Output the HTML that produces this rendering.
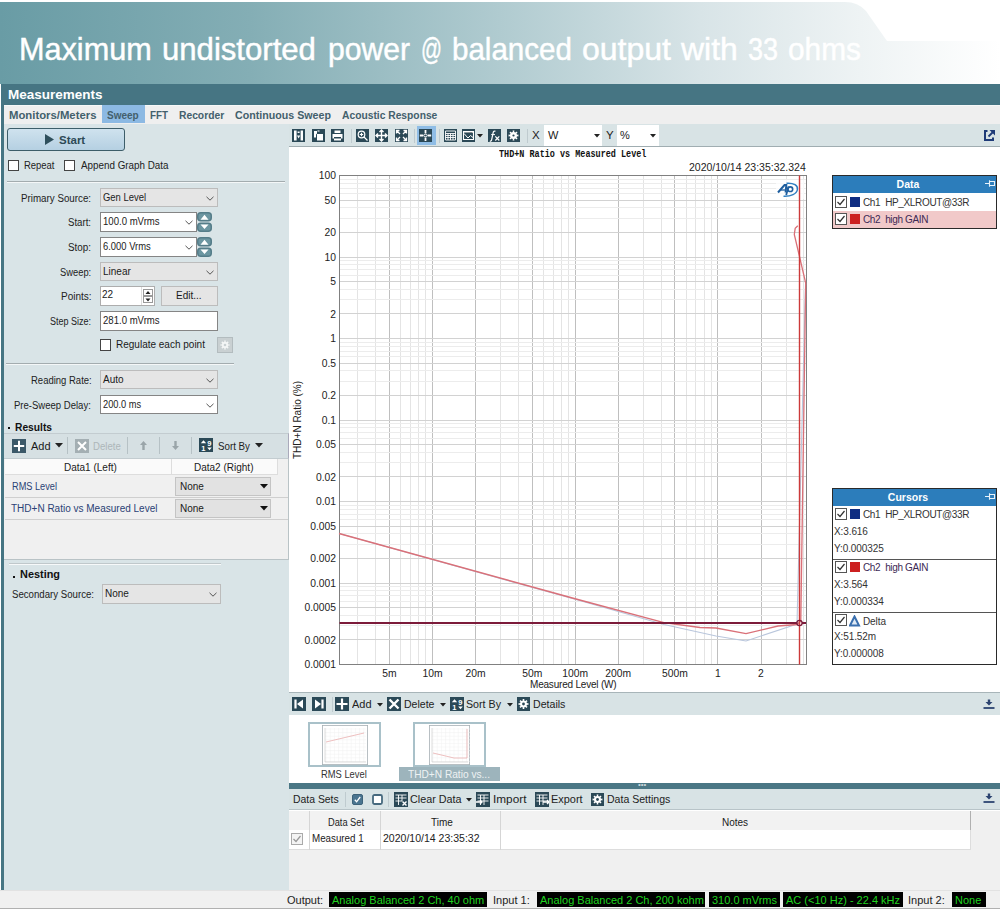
<!DOCTYPE html><html><head><meta charset="utf-8"><style>
*{margin:0;padding:0;box-sizing:border-box}
html,body{width:1000px;height:911px;overflow:hidden;background:#fff;font-family:"Liberation Sans",sans-serif;font-size:10px;color:#1a1a1a}
.a{position:absolute;white-space:nowrap}
.t{position:absolute;white-space:nowrap;line-height:1}
.ico{position:absolute;background:#2e4f5c}
.combo{position:absolute;background:#e5e5e5;border:1px solid #bcbcbc}
.inp{position:absolute;background:#fff;border:1px solid #858585}
.chev{position:absolute}
.cb{position:absolute;width:12px;height:12px;border:1px solid #333;background:#fff}
</style></head><body>

<svg class="a" style="left:0;top:0" width="1000" height="84" viewBox="0 0 1000 84">
<defs><linearGradient id="bg" x1="0" y1="0" x2="1" y2="0">
<stop offset="0" stop-color="#699ca5"/><stop offset="0.25" stop-color="#84aeb5"/><stop offset="0.5" stop-color="#b0cbd0"/><stop offset="0.7" stop-color="#d8e4e7"/><stop offset="0.86" stop-color="#eef3f4"/><stop offset="1" stop-color="#ffffff"/></linearGradient></defs>
<path d="M0,2 L845,2 Q858,2 866,11 L887,41 L1000,41 L1000,84 L0,84 Z" fill="url(#bg)"/>
</svg>

<div class="t" style="left:18.80px;top:35px;font-size:30.7px;color:#fff;transform-origin:0 0;transform:scaleX(0.9979);-webkit-text-stroke:0.45px #fff;">Maximum</div>
<div class="t" style="left:162.00px;top:35px;font-size:30.7px;color:#fff;transform-origin:0 0;transform:scaleX(1.0134);-webkit-text-stroke:0.45px #fff;">undistorted</div>
<div class="t" style="left:328.00px;top:35px;font-size:30.7px;color:#fff;transform-origin:0 0;transform:scaleX(0.9802);-webkit-text-stroke:0.45px #fff;">power</div>
<div class="t" style="left:421.00px;top:35px;font-size:30.7px;color:#fff;transform-origin:0 0;transform:scaleX(0.6739);-webkit-text-stroke:0.45px #fff;">@</div>
<div class="t" style="left:452.00px;top:35px;font-size:30.7px;color:#fff;transform-origin:0 0;transform:scaleX(0.9628);-webkit-text-stroke:0.45px #fff;">balanced</div>
<div class="t" style="left:582.00px;top:35px;font-size:30.7px;color:#fff;transform-origin:0 0;transform:scaleX(1.0428);-webkit-text-stroke:0.45px #fff;">output</div>
<div class="t" style="left:681.16px;top:35px;font-size:30.7px;color:#fff;transform-origin:0 0;transform:scaleX(1.0402);-webkit-text-stroke:0.45px #fff;">with</div>
<div class="t" style="left:748.00px;top:35px;font-size:30.7px;color:#fff;transform-origin:0 0;transform:scaleX(0.8804);-webkit-text-stroke:0.45px #fff;">33</div>
<div class="t" style="left:788.00px;top:35px;font-size:30.7px;color:#fff;transform-origin:0 0;transform:scaleX(0.9725);-webkit-text-stroke:0.45px #fff;">ohms</div>
<div class="a" style="left:1px;top:84px;width:999px;height:806px;background:#467583"></div>
<div class="t" style="left:8px;top:88px;font-size:13.5px;font-weight:bold;color:#fff">Measurements</div>
<div class="a" style="left:4px;top:105px;width:996px;height:19px;background:#efefef;border-top:1px solid #f6f8f8"></div>
<div class="a" style="left:102px;top:105px;width:43px;height:18px;background:#8cb9e3"></div>
<div class="t" style="left:9px;top:110px;font-size:11.4px;font-weight:bold;color:#43606c;transform-origin:0 0;transform:scaleX(0.9939);">Monitors/Meters</div>
<div class="t" style="left:107px;top:110px;font-size:11.4px;font-weight:bold;color:#43606c;transform-origin:0 0;transform:scaleX(0.8792);">Sweep</div>
<div class="t" style="left:150.2px;top:110px;font-size:11.4px;font-weight:bold;color:#43606c;transform-origin:0 0;transform:scaleX(0.8617);">FFT</div>
<div class="t" style="left:179px;top:110px;font-size:11.4px;font-weight:bold;color:#43606c;transform-origin:0 0;transform:scaleX(0.9031);">Recorder</div>
<div class="t" style="left:235px;top:110px;font-size:11.4px;font-weight:bold;color:#43606c;transform-origin:0 0;transform:scaleX(0.9357);">Continuous Sweep</div>
<div class="t" style="left:342.2px;top:110px;font-size:11.4px;font-weight:bold;color:#43606c;transform-origin:0 0;transform:scaleX(0.9018);">Acoustic Response</div>
<div class="a" style="left:4px;top:124px;width:285px;height:766px;background:#d9e4e7"></div>
<div class="a" style="left:7px;top:128px;width:118px;height:23px;border:1px solid #3d5d69;border-radius:3px;background:linear-gradient(#cfe2ee,#b5d0e2)"></div>
<svg class="a" style="left:45px;top:134px" width="10" height="11"><path d="M0,0 L9,5.5 L0,11Z" fill="#2e4f5c"/></svg>
<div class="t" style="left:59px;top:135px;font-size:11.5px;font-weight:bold;color:#2e4a56">Start</div>
<div class="cb" style="left:8px;top:160px;width:11px;height:11px;border-color:#444"></div>
<div class="t" style="left:24.3px;top:161px;font-size:10px;color:#222;transform-origin:0 0;transform:scaleX(0.9459);">Repeat</div>
<div class="cb" style="left:64px;top:160px;width:11px;height:11px;border-color:#444"></div>
<div class="t" style="left:80.5px;top:161px;font-size:10px;color:#222;transform-origin:0 0;transform:scaleX(0.9838);">Append Graph Data</div>
<div class="a" style="left:7px;top:181px;width:278px;height:1px;background:#a3acaf;box-shadow:0 1px 0 #f4f7f8"></div>
<div class="t" style="left:21.10px;top:194px;font-size:10px;color:#222;transform-origin:0 0;transform:scaleX(0.9777);">Primary Source:</div>
<div class="combo" style="left:100px;top:188px;width:118px;height:19px"></div>
<div class="t" style="left:103.00px;top:193px;font-size:10px;color:#222;transform-origin:0 0;transform:scaleX(0.9430);">Gen Level</div>
<svg class="chev" style="left:206px;top:195.5px" width="8" height="5"><path d="M0.5,0.8L4,4.2L7.5,0.8" fill="none" stroke="#555" stroke-width="1"/></svg>
<div class="t" style="left:68.20px;top:218px;font-size:10px;color:#222;transform-origin:0 0;transform:scaleX(0.9623);">Start:</div>
<div class="inp" style="left:100px;top:212px;width:97px;height:20px"></div>
<div class="t" style="left:103.00px;top:217px;font-size:10px;color:#222;transform-origin:0 0;transform:scaleX(0.9577);">100.0 mVrms</div>
<svg class="chev" style="left:185px;top:220.0px" width="8" height="5"><path d="M0.5,0.8L4,4.2L7.5,0.8" fill="none" stroke="#555" stroke-width="1"/></svg>
<div class="t" style="left:68.20px;top:243px;font-size:10px;color:#222;transform-origin:0 0;transform:scaleX(0.9850);">Stop:</div>
<div class="inp" style="left:100px;top:237px;width:97px;height:20px"></div>
<div class="t" style="left:103.00px;top:242px;font-size:10px;color:#222;transform-origin:0 0;transform:scaleX(0.9399);">6.000 Vrms</div>
<svg class="chev" style="left:185px;top:245.0px" width="8" height="5"><path d="M0.5,0.8L4,4.2L7.5,0.8" fill="none" stroke="#555" stroke-width="1"/></svg>
<svg class="a" style="left:197px;top:212px" width="15" height="20" viewBox="0 0 15 20"><rect x="0.75" y="0.75" width="13.5" height="8" rx="3" fill="#6c96a1" stroke="#557d89" stroke-width="1.5"/><rect x="0.75" y="11.25" width="13.5" height="8" rx="3" fill="#6c96a1" stroke="#557d89" stroke-width="1.5"/><path d="M3.5,7.8L7.5,2.8L11.5,7.8Z M3.5,12.5L11.5,12.5L7.5,17Z" fill="#fff"/></svg>
<svg class="a" style="left:197px;top:237px" width="15" height="20" viewBox="0 0 15 20"><rect x="0.75" y="0.75" width="13.5" height="8" rx="3" fill="#6c96a1" stroke="#557d89" stroke-width="1.5"/><rect x="0.75" y="11.25" width="13.5" height="8" rx="3" fill="#6c96a1" stroke="#557d89" stroke-width="1.5"/><path d="M3.5,7.8L7.5,2.8L11.5,7.8Z M3.5,12.5L11.5,12.5L7.5,17Z" fill="#fff"/></svg>
<div class="t" style="left:60.00px;top:268px;font-size:10px;color:#222;transform-origin:0 0;transform:scaleX(0.9355);">Sweep:</div>
<div class="combo" style="left:100px;top:262px;width:118px;height:19px"></div>
<div class="t" style="left:103px;top:267px">Linear</div>
<svg class="chev" style="left:206px;top:269.5px" width="8" height="5"><path d="M0.5,0.8L4,4.2L7.5,0.8" fill="none" stroke="#555" stroke-width="1"/></svg>
<div class="t" style="left:60.60px;top:292px;font-size:10px;color:#222;transform-origin:0 0;transform:scaleX(1.0016);">Points:</div>
<div class="inp" style="left:100px;top:286px;width:55px;height:20px;border-color:#adadad"></div><div class="t" style="left:102px;top:290px">22</div>
<div class="a" style="left:141px;top:287px;width:13px;height:18px;background:#fff;border-left:1px solid #ddd"></div>
<svg class="a" style="left:143px;top:289px" width="10" height="15"><rect x="0.5" y="0.5" width="9" height="6" fill="#fff" stroke="#999"/><rect x="0.5" y="7.5" width="9" height="6" fill="#fff" stroke="#999"/><path d="M2.5,5 L5,2 L7.5,5Z M2.5,9.5 L7.5,9.5 L5,12.5Z" fill="#222"/></svg>
<div class="combo" style="left:161px;top:286px;width:57px;height:20px"></div><div class="t" style="left:176px;top:291px">Edit...</div>
<div class="t" style="left:50.10px;top:317px;font-size:10px;color:#222;transform-origin:0 0;transform:scaleX(0.9013);">Step Size:</div>
<div class="inp" style="left:100px;top:311px;width:118px;height:20px"></div>
<div class="t" style="left:103.00px;top:316px;font-size:10px;color:#222;transform-origin:0 0;transform:scaleX(0.9577);">281.0 mVrms</div>
<div class="cb" style="left:100px;top:339px;width:11px;height:12px;border-color:#444"></div><div class="t" style="left:116px;top:340px">Regulate each point</div>
<div class="a" style="left:217px;top:337px;width:16px;height:16px;background:#c9d0d2;border:1px solid #b3bcbf"></div>
<svg class="a" style="left:219px;top:339px" width="12" height="12" viewBox="0 0 12 12"><path d="M5.18,1.47 L6.82,1.47 L6.58,2.75 L7.89,3.29 L8.62,2.22 L9.78,3.38 L8.71,4.11 L9.25,5.42 L10.53,5.18 L10.53,6.82 L9.25,6.58 L8.71,7.89 L9.78,8.62 L8.62,9.78 L7.89,8.71 L6.58,9.25 L6.82,10.53 L5.18,10.53 L5.42,9.25 L4.11,8.71 L3.38,9.78 L2.22,8.62 L3.29,7.89 L2.75,6.58 L1.47,6.82 L1.47,5.18 L2.75,5.42 L3.29,4.11 L2.22,3.38 L3.38,2.22 L4.11,3.29 L5.42,2.75Z" fill="#f4f6f6"/><circle cx="6" cy="6" r="1.3" fill="#c9d0d2"/></svg>
<div class="a" style="left:6px;top:363px;width:228px;height:1px;background:#a3acaf;box-shadow:0 1px 0 #f4f7f8"></div>
<div class="t" style="left:30.50px;top:376px;font-size:10px;color:#222;transform-origin:0 0;transform:scaleX(0.9492);">Reading Rate:</div>
<div class="combo" style="left:100px;top:370px;width:118px;height:19px"></div>
<div class="t" style="left:103px;top:375px">Auto</div>
<svg class="chev" style="left:206px;top:377.5px" width="8" height="5"><path d="M0.5,0.8L4,4.2L7.5,0.8" fill="none" stroke="#555" stroke-width="1"/></svg>
<div class="t" style="left:14.40px;top:401px;font-size:10px;color:#222;transform-origin:0 0;transform:scaleX(0.9529);">Pre-Sweep Delay:</div>
<div class="inp" style="left:100px;top:395px;width:118px;height:19px"></div>
<div class="t" style="left:103.00px;top:400px;font-size:10px;color:#222;transform-origin:0 0;transform:scaleX(0.9259);">200.0 ms</div>
<svg class="chev" style="left:206px;top:402.5px" width="8" height="5"><path d="M0.5,0.8L4,4.2L7.5,0.8" fill="none" stroke="#555" stroke-width="1"/></svg>
<div class="a" style="left:8px;top:427px;width:2px;height:2px;background:#111"></div>
<div class="t" style="left:14.5px;top:422px;font-size:11.5px;font-weight:bold;color:#111;transform-origin:0 0;transform:scaleX(0.8907);">Results</div>
<div class="a" style="left:4px;top:433px;width:285px;height:26px;background:#d6e0e3;border-top:1px solid #c3ccd0;border-bottom:1px solid #c3ccd0;border-right:1px solid #aab"></div>
<svg class="a" style="left:12px;top:439px" width="14" height="14"><rect width="14" height="14" fill="#3b5868"/><path d="M7,1.8V12.2M1.8,7H12.2" stroke="#fff" stroke-width="2"/></svg>
<div class="t" style="left:31px;top:441px;font-size:11px">Add</div>
<svg class="a" style="left:55px;top:443px" width="8" height="5"><path d="M0,0H8L4,4.5Z" fill="#222"/></svg>
<div class="a" style="left:67px;top:437px;width:1px;height:17px;background:#b6c1c5"></div>
<div class="a" style="left:127px;top:437px;width:1px;height:17px;background:#b6c1c5"></div>
<div class="a" style="left:159px;top:437px;width:1px;height:17px;background:#b6c1c5"></div>
<div class="a" style="left:191px;top:437px;width:1px;height:17px;background:#b6c1c5"></div>
<svg class="a" style="left:74.5px;top:439px" width="14" height="14"><rect width="14" height="14" fill="#a4afb3"/><path d="M3,3L11,11M11,3L3,11" stroke="#fff" stroke-width="2"/></svg>
<div class="t" style="left:93.40px;top:441px;font-size:11px;color:#adb6b9;transform-origin:0 0;transform:scaleX(0.8745);">Delete</div>
<svg class="a" style="left:139px;top:440px" width="9" height="11"><path d="M4.5,1L8,5H5.7V10H3.3V5H1Z" fill="#9aa5a9"/></svg>
<svg class="a" style="left:171px;top:440px" width="9" height="11"><path d="M4.5,10L8,6H5.7V1H3.3V6H1Z" fill="#9aa5a9"/></svg>
<svg class="a" style="left:199px;top:438px" width="14" height="14"><rect width="14" height="14" fill="#2b4957"/><path d="M1.8,5.2L4.5,2.2L7.2,5.2Z M8.2,9.5H12.8L10.5,12.3Z" fill="#fff"/><text x="2.3" y="12.6" font-family="Liberation Sans" font-weight="bold" font-size="7.5" fill="#fff">1</text><text x="8.2" y="7.6" font-family="Liberation Sans" font-weight="bold" font-size="7.5" fill="#fff">9</text></svg>
<div class="t" style="left:217.6px;top:441px;font-size:11px;color:#222;transform-origin:0 0;transform:scaleX(0.8873);">Sort By</div>
<svg class="a" style="left:255px;top:443px" width="8" height="5"><path d="M0,0H8L4,4.5Z" fill="#222"/></svg>
<div class="a" style="left:4px;top:459px;width:285px;height:101px;background:#f0f0f0;border-right:1px solid #b9c3c6;border-bottom:1px solid #b9c3c6"></div>
<div class="a" style="left:5px;top:459px;width:272px;height:16px;background:#fafafa;border-bottom:1px solid #ddd"></div>
<div class="a" style="left:171px;top:459px;width:1px;height:16px;background:#ddd"></div><div class="a" style="left:277px;top:459px;width:1px;height:16px;background:#ddd"></div>
<div class="t" style="left:64px;top:463px">Data1 (Left)</div><div class="t" style="left:194px;top:463px">Data2 (Right)</div>
<div class="a" style="left:5px;top:497px;width:283px;height:1px;background:#cfcfcf"></div><div class="a" style="left:5px;top:519px;width:283px;height:1px;background:#cfcfcf"></div>
<div class="t" style="left:11.60px;top:482px;font-size:10px;color:#2b4275;transform-origin:0 0;transform:scaleX(0.9202);">RMS Level</div>
<div class="t" style="left:11px;top:504px;color:#2b4275">THD+N Ratio vs Measured Level</div>
<div class="a" style="left:175px;top:477px;width:96px;height:19px;background:#e2e2e2;border:1px solid #c4c4c4"></div><div class="t" style="left:180px;top:482px">None</div>
<svg class="a" style="left:260px;top:484px" width="8" height="5"><path d="M0,0H8L4,4.5Z" fill="#111"/></svg>
<div class="a" style="left:175px;top:499px;width:96px;height:19px;background:#e2e2e2;border:1px solid #c4c4c4"></div><div class="t" style="left:180px;top:504px">None</div>
<svg class="a" style="left:260px;top:506px" width="8" height="5"><path d="M0,0H8L4,4.5Z" fill="#111"/></svg>
<div class="a" style="left:9px;top:563px;width:212px;height:1px;background:#c0c8cb;box-shadow:0 1px 0 #f7f9fa"></div>
<div class="a" style="left:13px;top:576px;width:2px;height:2px;background:#111"></div>
<div class="t" style="left:19.7px;top:569px;font-size:11.5px;font-weight:bold;color:#111;transform-origin:0 0;transform:scaleX(0.9486);">Nesting</div>
<div class="t" style="left:11.6px;top:590px;font-size:10px;color:#222;transform-origin:0 0;transform:scaleX(0.9642);">Secondary Source:</div>
<div class="combo" style="left:102px;top:584px;width:119px;height:20px"></div>
<div class="t" style="left:105px;top:589px">None</div>
<svg class="chev" style="left:209px;top:592.0px" width="8" height="5"><path d="M0.5,0.8L4,4.2L7.5,0.8" fill="none" stroke="#555" stroke-width="1"/></svg>
<div class="a" style="left:289px;top:124px;width:711px;height:766px;background:#fff"></div>
<div class="a" style="left:289px;top:124px;width:711px;height:23px;background:#d8e3e5;border-bottom:1px solid #a0adb1"></div>
<div class="a" style="left:417px;top:126px;width:19px;height:19px;background:#8fbde6"></div>
<div class="ico" style="left:292px;top:129px;width:13px;height:13px;background:#2b4957"></div>
<div class="ico" style="left:312px;top:129px;width:13px;height:13px;background:#2b4957"></div>
<div class="ico" style="left:331px;top:129px;width:13px;height:13px;background:#2b4957"></div>
<div class="ico" style="left:356px;top:129px;width:13px;height:13px;background:#2b4957"></div>
<div class="ico" style="left:375px;top:129px;width:13px;height:13px;background:#2b4957"></div>
<div class="ico" style="left:395px;top:129px;width:13px;height:13px;background:#2b4957"></div>
<div class="ico" style="left:419px;top:129px;width:13px;height:13px;background:#2b4957"></div>
<div class="ico" style="left:444px;top:129px;width:13px;height:13px;background:#2b4957"></div>
<div class="ico" style="left:462px;top:129px;width:13px;height:13px;background:#2b4957"></div>
<div class="ico" style="left:488px;top:129px;width:13px;height:13px;background:#2b4957"></div>
<div class="ico" style="left:507px;top:129px;width:13px;height:13px;background:#2b4957"></div>
<div class="a" style="left:351px;top:129px;width:1px;height:14px;background:#bfcbcf"></div>
<div class="a" style="left:414px;top:129px;width:1px;height:14px;background:#bfcbcf"></div>
<div class="a" style="left:439px;top:129px;width:1px;height:14px;background:#bfcbcf"></div>
<div class="a" style="left:527px;top:129px;width:1px;height:14px;background:#bfcbcf"></div>
<svg class="a" style="left:292px;top:129px" width="13" height="13" viewBox="0 0 13 13"><path d="M2,1.5H4.6V11.5H2Z M8.6,1.5H11V11.5H8.6Z M5.6,2.5H7.6V4H5.6Z M5,6.5H8.2L6.6,9.5Z" fill="#fff"/></svg>
<svg class="a" style="left:312px;top:129px" width="13" height="13" viewBox="0 0 13 13"><path d="M5,5H11V11.5H5Z M2,2H5V4.5L4,5.5V8.5H2Z" fill="#fff"/><path d="M5.5,2L7.5,2" stroke="#fff"/></svg>
<svg class="a" style="left:331px;top:129px" width="13" height="13" viewBox="0 0 13 13"><path d="M3.5,1.5H9.5V4H3.5Z M1.5,5H11.5V9.5H10V8H3V9.5H1.5Z M3,9.5H10V11.5H3Z" fill="#fff"/></svg>
<svg class="a" style="left:356px;top:129px" width="13" height="13" viewBox="0 0 13 13"><circle cx="5.5" cy="5.5" r="3.3" fill="none" stroke="#fff" stroke-width="1.2"/><path d="M8,8L11.5,11.5M3.8,5.5H7.2M5.5,3.8V7.2" stroke="#fff" stroke-width="1.2"/></svg>
<svg class="a" style="left:375px;top:129px" width="13" height="13" viewBox="0 0 13 13"><path d="M6.5,1V12M1,6.5H12M4.5,3L6.5,1L8.5,3M4.5,10L6.5,12L8.5,10M3,4.5L1,6.5L3,8.5M10,4.5L12,6.5L10,8.5" fill="none" stroke="#fff" stroke-width="1.4"/></svg>
<svg class="a" style="left:395px;top:129px" width="13" height="13" viewBox="0 0 13 13"><path d="M1.5,1.5L5,5M11.5,1.5L8,5M1.5,11.5L5,8M11.5,11.5L8,8M1.5,4.5V1.5H4.5M8.5,1.5H11.5V4.5M1.5,8.5V11.5H4.5M8.5,11.5H11.5V8.5" fill="none" stroke="#fff" stroke-width="1.3"/></svg>
<svg class="a" style="left:419px;top:129px" width="13" height="13" viewBox="0 0 13 13"><path d="M6.5,1V4.6M6.5,8.4V12M0.8,6.5H4.3M8.7,6.5H12.2" stroke="#fff" stroke-width="1.8"/><ellipse cx="6.5" cy="6.5" rx="1.7" ry="1.2" fill="none" stroke="#fff" stroke-width="0.9"/></svg>
<svg class="a" style="left:444px;top:129px" width="13" height="13" viewBox="0 0 13 13"><path d="M1.5,2H11.5V11H1.5Z M1.5,4.5H11.5M1.5,6.5H11.5M1.5,8.5H11.5M4,4.5V11M6.5,4.5V11M9,4.5V11" fill="none" stroke="#fff" stroke-width="0.9"/></svg>
<svg class="a" style="left:462px;top:129px" width="13" height="13" viewBox="0 0 13 13"><path d="M1.5,2.5H11.5V10.5H1.5Z" fill="none" stroke="#fff" stroke-width="1.1"/><path d="M2,4.5L6,9L8.5,6.5L11,8.5" fill="none" stroke="#fff" stroke-width="1"/><path d="M2,3H11V4" stroke="#fff" stroke-width="1"/></svg>
<svg class="a" style="left:477px;top:134px" width="6" height="4"><path d="M0,0H6L3,3.5Z" fill="#222"/></svg>
<svg class="a" style="left:488px;top:129px" width="13" height="13" viewBox="0 0 13 13"><path d="M7.5,2.2C6.2,1.8 5.4,2.4 5.1,3.8L3.6,10.8C3.3,12 2.6,12.3 1.8,12" fill="none" stroke="#fff" stroke-width="1.2"/><path d="M3.2,5.6H7" stroke="#fff" stroke-width="1"/><path d="M7.3,7.3L11.3,11.5M11.3,7.3L7.3,11.5" stroke="#fff" stroke-width="1.2"/></svg>
<svg class="a" style="left:507px;top:129px" width="13" height="13" viewBox="0 0 13 13"><path d="M5.60,1.58 L7.40,1.58 L7.13,2.96 L8.56,3.55 L9.35,2.39 L10.61,3.65 L9.45,4.44 L10.04,5.87 L11.42,5.60 L11.42,7.40 L10.04,7.13 L9.45,8.56 L10.61,9.35 L9.35,10.61 L8.56,9.45 L7.13,10.04 L7.40,11.42 L5.60,11.42 L5.87,10.04 L4.44,9.45 L3.65,10.61 L2.39,9.35 L3.55,8.56 L2.96,7.13 L1.58,7.40 L1.58,5.60 L2.96,5.87 L3.55,4.44 L2.39,3.65 L3.65,2.39 L4.44,3.55 L5.87,2.96Z" fill="#fff"/><circle cx="6.5" cy="6.5" r="1.1" fill="#2b4957"/></svg>
<div class="t" style="left:532px;top:130px;font-size:11.5px;color:#222">X</div>
<div class="a" style="left:544px;top:125px;width:58px;height:21px;background:#fff"></div><div class="t" style="left:548px;top:130px;font-size:11px">W</div>
<svg class="a" style="left:594px;top:134px" width="6" height="4"><path d="M0,0H6L3,3.5Z" fill="#222"/></svg>
<div class="t" style="left:606px;top:130px;font-size:11.5px;color:#222">Y</div>
<div class="a" style="left:617px;top:125px;width:42px;height:21px;background:#fff"></div><div class="t" style="left:620px;top:130px;font-size:11px">%</div>
<svg class="a" style="left:650px;top:134px" width="6" height="4"><path d="M0,0H6L3,3.5Z" fill="#222"/></svg>
<svg class="a" style="left:983px;top:129px" width="13" height="13" viewBox="0 0 13 13"><path d="M4.5,2H2V11H10V8.5" fill="none" stroke="#1f3b78" stroke-width="2"/><path d="M5.5,7.5L10,3" stroke="#1f3b78" stroke-width="1.8"/><path d="M6.5,1H12V6.5Z" fill="#1f3b78"/></svg>
<div class="t" style="left:499px;top:149px;font-family:'Liberation Mono',monospace;font-size:11px;font-weight:bold;color:#111;transform-origin:0 0;transform:scaleX(0.77)">THD+N Ratio vs Measured Level</div>
<div class="t" style="left:689px;top:162px;font-size:10.5px;color:#222">2020/10/14 23:35:32.324</div>
<svg class="a" style="left:0;top:0" width="1000" height="911"><line x1="357.5" y1="175.5" x2="357.5" y2="664.5" stroke="#e4e4e4" stroke-width="1"/><line x1="375.5" y1="175.5" x2="375.5" y2="664.5" stroke="#e4e4e4" stroke-width="1"/><line x1="389.5" y1="175.5" x2="389.5" y2="664.5" stroke="#bfbfbf" stroke-width="1"/><line x1="400.5" y1="175.5" x2="400.5" y2="664.5" stroke="#e4e4e4" stroke-width="1"/><line x1="410.5" y1="175.5" x2="410.5" y2="664.5" stroke="#e4e4e4" stroke-width="1"/><line x1="418.5" y1="175.5" x2="418.5" y2="664.5" stroke="#e4e4e4" stroke-width="1"/><line x1="425.5" y1="175.5" x2="425.5" y2="664.5" stroke="#e4e4e4" stroke-width="1"/><line x1="432.5" y1="175.5" x2="432.5" y2="664.5" stroke="#bfbfbf" stroke-width="1"/><line x1="475.5" y1="175.5" x2="475.5" y2="664.5" stroke="#bfbfbf" stroke-width="1"/><line x1="500.5" y1="175.5" x2="500.5" y2="664.5" stroke="#e4e4e4" stroke-width="1"/><line x1="518.5" y1="175.5" x2="518.5" y2="664.5" stroke="#e4e4e4" stroke-width="1"/><line x1="532.5" y1="175.5" x2="532.5" y2="664.5" stroke="#bfbfbf" stroke-width="1"/><line x1="543.5" y1="175.5" x2="543.5" y2="664.5" stroke="#e4e4e4" stroke-width="1"/><line x1="553.5" y1="175.5" x2="553.5" y2="664.5" stroke="#e4e4e4" stroke-width="1"/><line x1="561.5" y1="175.5" x2="561.5" y2="664.5" stroke="#e4e4e4" stroke-width="1"/><line x1="568.5" y1="175.5" x2="568.5" y2="664.5" stroke="#e4e4e4" stroke-width="1"/><line x1="575.5" y1="175.5" x2="575.5" y2="664.5" stroke="#bfbfbf" stroke-width="1"/><line x1="618.5" y1="175.5" x2="618.5" y2="664.5" stroke="#bfbfbf" stroke-width="1"/><line x1="643.5" y1="175.5" x2="643.5" y2="664.5" stroke="#e4e4e4" stroke-width="1"/><line x1="661.5" y1="175.5" x2="661.5" y2="664.5" stroke="#e4e4e4" stroke-width="1"/><line x1="674.5" y1="175.5" x2="674.5" y2="664.5" stroke="#bfbfbf" stroke-width="1"/><line x1="686.5" y1="175.5" x2="686.5" y2="664.5" stroke="#e4e4e4" stroke-width="1"/><line x1="695.5" y1="175.5" x2="695.5" y2="664.5" stroke="#e4e4e4" stroke-width="1"/><line x1="704.5" y1="175.5" x2="704.5" y2="664.5" stroke="#e4e4e4" stroke-width="1"/><line x1="711.5" y1="175.5" x2="711.5" y2="664.5" stroke="#e4e4e4" stroke-width="1"/><line x1="717.5" y1="175.5" x2="717.5" y2="664.5" stroke="#bfbfbf" stroke-width="1"/><line x1="761.5" y1="175.5" x2="761.5" y2="664.5" stroke="#bfbfbf" stroke-width="1"/><line x1="786.5" y1="175.5" x2="786.5" y2="664.5" stroke="#e4e4e4" stroke-width="1"/><line x1="803.5" y1="175.5" x2="803.5" y2="664.5" stroke="#e4e4e4" stroke-width="1"/><line x1="339.5" y1="639.5" x2="806.5" y2="639.5" stroke="#d2d2d2" stroke-width="1"/><line x1="339.5" y1="625.5" x2="806.5" y2="625.5" stroke="#ececec" stroke-width="1"/><line x1="339.5" y1="615.5" x2="806.5" y2="615.5" stroke="#ececec" stroke-width="1"/><line x1="339.5" y1="607.5" x2="806.5" y2="607.5" stroke="#d2d2d2" stroke-width="1"/><line x1="339.5" y1="601.5" x2="806.5" y2="601.5" stroke="#ececec" stroke-width="1"/><line x1="339.5" y1="595.5" x2="806.5" y2="595.5" stroke="#ececec" stroke-width="1"/><line x1="339.5" y1="590.5" x2="806.5" y2="590.5" stroke="#ececec" stroke-width="1"/><line x1="339.5" y1="586.5" x2="806.5" y2="586.5" stroke="#ececec" stroke-width="1"/><line x1="339.5" y1="583.5" x2="806.5" y2="583.5" stroke="#d2d2d2" stroke-width="1"/><line x1="339.5" y1="558.5" x2="806.5" y2="558.5" stroke="#d2d2d2" stroke-width="1"/><line x1="339.5" y1="544.5" x2="806.5" y2="544.5" stroke="#ececec" stroke-width="1"/><line x1="339.5" y1="533.5" x2="806.5" y2="533.5" stroke="#ececec" stroke-width="1"/><line x1="339.5" y1="526.5" x2="806.5" y2="526.5" stroke="#d2d2d2" stroke-width="1"/><line x1="339.5" y1="519.5" x2="806.5" y2="519.5" stroke="#ececec" stroke-width="1"/><line x1="339.5" y1="514.5" x2="806.5" y2="514.5" stroke="#ececec" stroke-width="1"/><line x1="339.5" y1="509.5" x2="806.5" y2="509.5" stroke="#ececec" stroke-width="1"/><line x1="339.5" y1="505.5" x2="806.5" y2="505.5" stroke="#ececec" stroke-width="1"/><line x1="339.5" y1="501.5" x2="806.5" y2="501.5" stroke="#d2d2d2" stroke-width="1"/><line x1="339.5" y1="476.5" x2="806.5" y2="476.5" stroke="#d2d2d2" stroke-width="1"/><line x1="339.5" y1="462.5" x2="806.5" y2="462.5" stroke="#ececec" stroke-width="1"/><line x1="339.5" y1="452.5" x2="806.5" y2="452.5" stroke="#ececec" stroke-width="1"/><line x1="339.5" y1="444.5" x2="806.5" y2="444.5" stroke="#d2d2d2" stroke-width="1"/><line x1="339.5" y1="438.5" x2="806.5" y2="438.5" stroke="#ececec" stroke-width="1"/><line x1="339.5" y1="432.5" x2="806.5" y2="432.5" stroke="#ececec" stroke-width="1"/><line x1="339.5" y1="427.5" x2="806.5" y2="427.5" stroke="#ececec" stroke-width="1"/><line x1="339.5" y1="423.5" x2="806.5" y2="423.5" stroke="#ececec" stroke-width="1"/><line x1="339.5" y1="420.5" x2="806.5" y2="420.5" stroke="#d2d2d2" stroke-width="1"/><line x1="339.5" y1="395.5" x2="806.5" y2="395.5" stroke="#d2d2d2" stroke-width="1"/><line x1="339.5" y1="381.5" x2="806.5" y2="381.5" stroke="#ececec" stroke-width="1"/><line x1="339.5" y1="370.5" x2="806.5" y2="370.5" stroke="#ececec" stroke-width="1"/><line x1="339.5" y1="363.5" x2="806.5" y2="363.5" stroke="#d2d2d2" stroke-width="1"/><line x1="339.5" y1="356.5" x2="806.5" y2="356.5" stroke="#ececec" stroke-width="1"/><line x1="339.5" y1="351.5" x2="806.5" y2="351.5" stroke="#ececec" stroke-width="1"/><line x1="339.5" y1="346.5" x2="806.5" y2="346.5" stroke="#ececec" stroke-width="1"/><line x1="339.5" y1="342.5" x2="806.5" y2="342.5" stroke="#ececec" stroke-width="1"/><line x1="339.5" y1="338.5" x2="806.5" y2="338.5" stroke="#d2d2d2" stroke-width="1"/><line x1="339.5" y1="313.5" x2="806.5" y2="313.5" stroke="#d2d2d2" stroke-width="1"/><line x1="339.5" y1="299.5" x2="806.5" y2="299.5" stroke="#ececec" stroke-width="1"/><line x1="339.5" y1="289.5" x2="806.5" y2="289.5" stroke="#ececec" stroke-width="1"/><line x1="339.5" y1="281.5" x2="806.5" y2="281.5" stroke="#d2d2d2" stroke-width="1"/><line x1="339.5" y1="275.5" x2="806.5" y2="275.5" stroke="#ececec" stroke-width="1"/><line x1="339.5" y1="269.5" x2="806.5" y2="269.5" stroke="#ececec" stroke-width="1"/><line x1="339.5" y1="264.5" x2="806.5" y2="264.5" stroke="#ececec" stroke-width="1"/><line x1="339.5" y1="260.5" x2="806.5" y2="260.5" stroke="#ececec" stroke-width="1"/><line x1="339.5" y1="257.5" x2="806.5" y2="257.5" stroke="#d2d2d2" stroke-width="1"/><line x1="339.5" y1="232.5" x2="806.5" y2="232.5" stroke="#d2d2d2" stroke-width="1"/><line x1="339.5" y1="218.5" x2="806.5" y2="218.5" stroke="#ececec" stroke-width="1"/><line x1="339.5" y1="207.5" x2="806.5" y2="207.5" stroke="#ececec" stroke-width="1"/><line x1="339.5" y1="200.5" x2="806.5" y2="200.5" stroke="#d2d2d2" stroke-width="1"/><line x1="339.5" y1="193.5" x2="806.5" y2="193.5" stroke="#ececec" stroke-width="1"/><line x1="339.5" y1="188.5" x2="806.5" y2="188.5" stroke="#ececec" stroke-width="1"/><line x1="339.5" y1="183.5" x2="806.5" y2="183.5" stroke="#ececec" stroke-width="1"/><line x1="339.5" y1="179.5" x2="806.5" y2="179.5" stroke="#ececec" stroke-width="1"/><rect x="339.5" y="175.5" width="467.0" height="489.0" fill="none" stroke="#808080" stroke-width="1"/><rect x="776" y="180" width="28" height="19" fill="#fff" fill-opacity="0.75"/><polyline points="339,533.5 576,599.5 664,624.5 716,636 746,641 797,624 805.5,284" fill="none" stroke="#b9c6dc" stroke-width="1.1"/><polyline points="339,533.5 576,599 664,622.6 700,627.5 716,628 746,633.7 778,626 797,624.5 800.8,621 805.7,283 794.3,234.4 795.2,228.4 797.8,225.8" fill="none" stroke="#da7078" stroke-width="1.3"/><line x1="799.5" y1="175.5" x2="799.5" y2="664.5" stroke="#cc3a3a" stroke-width="1.4"/><line x1="339.5" y1="623" x2="797" y2="623" stroke="#7c1b3a" stroke-width="2"/><line x1="802" y1="623" x2="806" y2="623" stroke="#7c1b3a" stroke-width="2"/><circle cx="799.5" cy="623" r="2.6" fill="none" stroke="#7c1b3a" stroke-width="1.3"/></svg>
<div class="t" style="right:664px;top:171.0px;font-size:10.3px;color:#222">100</div>
<div class="t" style="right:664px;top:195.5px;font-size:10.3px;color:#222">50</div>
<div class="t" style="right:664px;top:228.0px;font-size:10.3px;color:#222">20</div>
<div class="t" style="right:664px;top:252.5px;font-size:10.3px;color:#222">10</div>
<div class="t" style="right:664px;top:277.0px;font-size:10.3px;color:#222">5</div>
<div class="t" style="right:664px;top:309.5px;font-size:10.3px;color:#222">2</div>
<div class="t" style="right:664px;top:334.0px;font-size:10.3px;color:#222">1</div>
<div class="t" style="right:664px;top:358.5px;font-size:10.3px;color:#222">0.5</div>
<div class="t" style="right:664px;top:391.0px;font-size:10.3px;color:#222">0.2</div>
<div class="t" style="right:664px;top:415.5px;font-size:10.3px;color:#222">0.1</div>
<div class="t" style="right:664px;top:440.0px;font-size:10.3px;color:#222">0.05</div>
<div class="t" style="right:664px;top:472.5px;font-size:10.3px;color:#222">0.02</div>
<div class="t" style="right:664px;top:497.0px;font-size:10.3px;color:#222">0.01</div>
<div class="t" style="right:664px;top:521.5px;font-size:10.3px;color:#222">0.005</div>
<div class="t" style="right:664px;top:554.0px;font-size:10.3px;color:#222">0.002</div>
<div class="t" style="right:664px;top:578.5px;font-size:10.3px;color:#222">0.001</div>
<div class="t" style="right:664px;top:603.0px;font-size:10.3px;color:#222">0.0005</div>
<div class="t" style="right:664px;top:635.5px;font-size:10.3px;color:#222">0.0002</div>
<div class="t" style="right:664px;top:660.0px;font-size:10.3px;color:#222">0.0001</div>
<div class="t" style="left:349.5px;width:80px;text-align:center;top:669px;font-size:10.3px;color:#222">5m</div>
<div class="t" style="left:392.5px;width:80px;text-align:center;top:669px;font-size:10.3px;color:#222">10m</div>
<div class="t" style="left:435.5px;width:80px;text-align:center;top:669px;font-size:10.3px;color:#222">20m</div>
<div class="t" style="left:492.2px;width:80px;text-align:center;top:669px;font-size:10.3px;color:#222">50m</div>
<div class="t" style="left:535.2px;width:80px;text-align:center;top:669px;font-size:10.3px;color:#222">100m</div>
<div class="t" style="left:578.2px;width:80px;text-align:center;top:669px;font-size:10.3px;color:#222">200m</div>
<div class="t" style="left:634.9px;width:80px;text-align:center;top:669px;font-size:10.3px;color:#222">500m</div>
<div class="t" style="left:677.9px;width:80px;text-align:center;top:669px;font-size:10.3px;color:#222">1</div>
<div class="t" style="left:720.9px;width:80px;text-align:center;top:669px;font-size:10.3px;color:#222">2</div>
<div class="t" style="left:530px;top:680px;font-size:10px;letter-spacing:-0.2px;color:#222">Measured Level (W)</div>
<div class="t" style="left:293px;top:459px;font-size:10px;color:#222;transform-origin:0 0;transform:rotate(-90deg)">THD+N Ratio (%)</div>
<svg class="a" style="left:770px;top:176px" width="36" height="24" viewBox="770 176 36 24"><path d="M786.5,183.3 C794,182.8 798,185.5 797.4,189.5 C796.8,194 791,196.5 783.5,196.2" fill="none" stroke="#2f7ec0" stroke-width="1.5"/><path d="M778,192.5 L784.5,185 L786.3,185 L785.6,192.5" fill="none" stroke="#1f5f9f" stroke-width="2"/><path d="M781,190H785.5" stroke="#1f5f9f" stroke-width="1.3"/><path d="M788.5,186.5 L786.2,195" stroke="#1f5f9f" stroke-width="1.8"/><ellipse cx="790.3" cy="189.2" rx="2.4" ry="2.3" fill="none" stroke="#1f5f9f" stroke-width="1.6"/></svg>
<div class="a" style="left:832px;top:175px;width:165px;height:54px;border:1px solid #2a2a2a;background:#fff"></div>
<div class="a" style="left:833px;top:176px;width:163px;height:17px;background:#2c7dbb"></div>
<div class="t" style="left:833px;top:179px;width:150px;text-align:center;font-size:10.5px;font-weight:bold;color:#fff">Data</div>
<svg class="a" style="left:984.5px;top:180px" width="11" height="7"><path d="M0,3.5H4.5M4.5,0.3V6.7M4.5,1.5H9.5V5.5H4.5" fill="none" stroke="#e8f2fa" stroke-width="1.1"/></svg>
<div class="a" style="left:833px;top:211px;width:163px;height:17px;background:#f1c9c9"></div>
<svg class="a" style="left:835px;top:196px" width="12" height="12"><rect x="0.5" y="0.5" width="11" height="11" fill="#fff" stroke="#555"/><path d="M2.5,6L5,8.5L9.5,3" fill="none" stroke="#333" stroke-width="1.2"/></svg>
<div class="a" style="left:850px;top:197px;width:10px;height:10px;background:#0f2d82"></div>
<div class="t" style="left:863px;top:198px;font-size:10px;letter-spacing:-0.35px;color:#333">Ch1&nbsp; HP_XLROUT@33R</div>
<svg class="a" style="left:835px;top:213px" width="12" height="12"><rect x="0.5" y="0.5" width="11" height="11" fill="#fff" stroke="#555"/><path d="M2.5,6L5,8.5L9.5,3" fill="none" stroke="#333" stroke-width="1.2"/></svg>
<div class="a" style="left:850px;top:214px;width:10px;height:10px;background:#cc2020"></div>
<div class="t" style="left:863px;top:215px;font-size:10px;letter-spacing:-0.35px;color:#3c2a55">Ch2&nbsp; high GAIN</div>
<div class="a" style="left:832px;top:488px;width:165px;height:177px;border:1px solid #2a2a2a;background:#fff"></div>
<div class="a" style="left:833px;top:489px;width:163px;height:17px;background:#2c7dbb"></div>
<div class="t" style="left:833px;top:492px;width:150px;text-align:center;font-size:10.5px;font-weight:bold;color:#fff">Cursors</div>
<svg class="a" style="left:984.5px;top:493px" width="11" height="7"><path d="M0,3.5H4.5M4.5,0.3V6.7M4.5,1.5H9.5V5.5H4.5" fill="none" stroke="#e8f2fa" stroke-width="1.1"/></svg>
<div class="a" style="left:833px;top:559px;width:163px;height:1px;background:#555"></div><div class="a" style="left:833px;top:612px;width:163px;height:1px;background:#555"></div>
<svg class="a" style="left:835px;top:508px" width="12" height="12"><rect x="0.5" y="0.5" width="11" height="11" fill="#fff" stroke="#555"/><path d="M2.5,6L5,8.5L9.5,3" fill="none" stroke="#333" stroke-width="1.2"/></svg>
<div class="a" style="left:850px;top:509px;width:10px;height:10px;background:#0f2d82"></div>
<div class="t" style="left:863px;top:510px;font-size:10px;letter-spacing:-0.35px;color:#333">Ch1&nbsp; HP_XLROUT@33R</div>
<div class="t" style="left:834px;top:527px;font-size:10px;letter-spacing:-0.1px;color:#333">X:3.616</div><div class="t" style="left:834px;top:544px;font-size:10px;letter-spacing:-0.1px;color:#333">Y:0.000325</div>
<svg class="a" style="left:835px;top:561px" width="12" height="12"><rect x="0.5" y="0.5" width="11" height="11" fill="#fff" stroke="#555"/><path d="M2.5,6L5,8.5L9.5,3" fill="none" stroke="#333" stroke-width="1.2"/></svg>
<div class="a" style="left:850px;top:562px;width:10px;height:10px;background:#cc2020"></div>
<div class="t" style="left:863px;top:563px;font-size:10px;letter-spacing:-0.35px;color:#3c2a55">Ch2&nbsp; high GAIN</div>
<div class="t" style="left:834px;top:580px;font-size:10px;letter-spacing:-0.1px;color:#333">X:3.564</div><div class="t" style="left:834px;top:597px;font-size:10px;letter-spacing:-0.1px;color:#333">Y:0.000334</div>
<svg class="a" style="left:835px;top:614px" width="12" height="12"><rect x="0.5" y="0.5" width="11" height="11" fill="#fff" stroke="#555"/><path d="M2.5,6L5,8.5L9.5,3" fill="none" stroke="#333" stroke-width="1.2"/></svg>
<svg class="a" style="left:849px;top:615px" width="12" height="12"><path d="M5.5,1.5L10,10.5H1Z" fill="#dfe9f4" stroke="#3a6fae" stroke-width="2"/></svg>
<div class="t" style="left:863px;top:617px;font-size:10px;letter-spacing:-0.1px;color:#333">Delta</div>
<div class="t" style="left:834px;top:632px;font-size:10px;letter-spacing:-0.1px;color:#333">X:51.52m</div><div class="t" style="left:834px;top:649px;font-size:10px;letter-spacing:-0.1px;color:#333">Y:0.000008</div>
<div class="a" style="left:289px;top:692px;width:711px;height:1px;background:#a8b5b9"></div>
<div class="a" style="left:289px;top:693px;width:711px;height:22px;background:#d8e3e5"></div>
<svg class="a" style="left:292px;top:697px" width="14" height="14" viewBox="0 0 14 14"><rect width="14" height="14" fill="#2b4957"/><path d="M3.5,2.5V11.5" stroke="#fff" stroke-width="2.2"/><path d="M11,2.5V11.5L5,7Z" fill="#fff"/></svg>
<svg class="a" style="left:311.5px;top:697px" width="14" height="14" viewBox="0 0 14 14"><rect width="14" height="14" fill="#2b4957"/><path d="M10.5,2.5V11.5" stroke="#fff" stroke-width="2.2"/><path d="M3,2.5V11.5L9,7Z" fill="#fff"/></svg>
<div class="a" style="left:332px;top:697px;width:1px;height:15px;background:#bfcbcf"></div>
<svg class="a" style="left:335px;top:697px" width="14" height="14" viewBox="0 0 14 14"><rect width="14" height="14" fill="#2b4957"/><path d="M7,1.5V12.5M1.5,7H12.5" stroke="#fff" stroke-width="2.2"/></svg>
<div class="t" style="left:352px;top:699px;font-size:11.5px;color:#222;transform-origin:0 0;transform:scaleX(0.9530);">Add</div>
<svg class="a" style="left:377px;top:703px" width="6" height="4"><path d="M0,0H6L3,3.5Z" fill="#222"/></svg>
<svg class="a" style="left:387px;top:697px" width="14" height="14" viewBox="0 0 14 14"><rect width="14" height="14" fill="#2b4957"/><path d="M2.5,2.5L11.5,11.5M11.5,2.5L2.5,11.5" stroke="#fff" stroke-width="2.4"/></svg>
<div class="t" style="left:403.5px;top:699px;font-size:11.5px;color:#222;transform-origin:0 0;transform:scaleX(0.9146);">Delete</div>
<svg class="a" style="left:440px;top:703px" width="6" height="4"><path d="M0,0H6L3,3.5Z" fill="#222"/></svg>
<svg class="a" style="left:450px;top:697px" width="14" height="14"><rect width="14" height="14" fill="#2b4957"/><path d="M1.8,5.2L4.5,2.2L7.2,5.2Z M8.2,9.5H12.8L10.5,12.3Z" fill="#fff"/><text x="2.3" y="12.6" font-family="Liberation Sans" font-weight="bold" font-size="7.5" fill="#fff">1</text><text x="8.2" y="7.6" font-family="Liberation Sans" font-weight="bold" font-size="7.5" fill="#fff">9</text></svg>
<div class="t" style="left:466px;top:699px;font-size:11.5px;color:#222;transform-origin:0 0;transform:scaleX(0.9282);">Sort By</div>
<svg class="a" style="left:507px;top:703px" width="6" height="4"><path d="M0,0H6L3,3.5Z" fill="#222"/></svg>
<svg class="a" style="left:517px;top:697px" width="13" height="14" viewBox="0 0 13 14"><rect width="13" height="14" fill="#2b4957"/><path d="M5.60,2.08 L7.40,2.08 L7.13,3.46 L8.56,4.05 L9.35,2.89 L10.61,4.15 L9.45,4.94 L10.04,6.37 L11.42,6.10 L11.42,7.90 L10.04,7.63 L9.45,9.06 L10.61,9.85 L9.35,11.11 L8.56,9.95 L7.13,10.54 L7.40,11.92 L5.60,11.92 L5.87,10.54 L4.44,9.95 L3.65,11.11 L2.39,9.85 L3.55,9.06 L2.96,7.63 L1.58,7.90 L1.58,6.10 L2.96,6.37 L3.55,4.94 L2.39,4.15 L3.65,2.89 L4.44,4.05 L5.87,3.46Z" fill="#fff"/><circle cx="6.5" cy="7" r="1.4" fill="#2b4957"/></svg>
<div class="t" style="left:533.3px;top:699px;font-size:11.5px;color:#222;transform-origin:0 0;transform:scaleX(0.9218);">Details</div>
<svg class="a" style="left:983px;top:699px" width="12" height="11"><path d="M4.8,0.5H7.2V3H9.5L6,6.5L2.5,3H4.8Z" fill="#2c4470"/><path d="M0.5,9H11.5" stroke="#2c4470" stroke-width="1.8"/></svg>
<div class="a" style="left:308px;top:722px;width:73px;height:45px;border:2px solid #a9c1c9;background:#fff"></div>
<svg class="a" style="left:322px;top:725px" width="46" height="40" viewBox="0 0 46 40"><rect x="0.4" y="0.4" width="45.2" height="39.2" fill="#fff" stroke="#a7b0b4" stroke-width="0.8"/><path d="M4.0,3V37" stroke="#f0f0f0" stroke-width="0.5"/><path d="M8.2,3V37" stroke="#f0f0f0" stroke-width="0.5"/><path d="M12.4,3V37" stroke="#f0f0f0" stroke-width="0.5"/><path d="M16.6,3V37" stroke="#f0f0f0" stroke-width="0.5"/><path d="M20.8,3V37" stroke="#f0f0f0" stroke-width="0.5"/><path d="M25.0,3V37" stroke="#f0f0f0" stroke-width="0.5"/><path d="M29.2,3V37" stroke="#f0f0f0" stroke-width="0.5"/><path d="M33.4,3V37" stroke="#f0f0f0" stroke-width="0.5"/><path d="M37.6,3V37" stroke="#f0f0f0" stroke-width="0.5"/><path d="M41.8,3V37" stroke="#f0f0f0" stroke-width="0.5"/><path d="M3,4.0H44" stroke="#f0f0f0" stroke-width="0.5"/><path d="M3,7.6H44" stroke="#f0f0f0" stroke-width="0.5"/><path d="M3,11.2H44" stroke="#f0f0f0" stroke-width="0.5"/><path d="M3,14.8H44" stroke="#f0f0f0" stroke-width="0.5"/><path d="M3,18.4H44" stroke="#f0f0f0" stroke-width="0.5"/><path d="M3,22.0H44" stroke="#f0f0f0" stroke-width="0.5"/><path d="M3,25.6H44" stroke="#f0f0f0" stroke-width="0.5"/><path d="M3,29.2H44" stroke="#f0f0f0" stroke-width="0.5"/><path d="M3,32.8H44" stroke="#f0f0f0" stroke-width="0.5"/><path d="M3,36.4H44" stroke="#f0f0f0" stroke-width="0.5"/><path d="M3,3V37H44" fill="none" stroke="#c8c8c8" stroke-width="0.6"/></svg>
<svg class="a" style="left:322px;top:725px" width="46" height="40"><path d="M4,17L42,8" stroke="#eab0b0" stroke-width="0.8"/></svg>
<div class="t" style="left:321px;top:769px;font-size:10.5px;color:#333;transform-origin:0 0;transform:scaleX(0.8919);">RMS Level</div>
<div class="a" style="left:413px;top:722px;width:73px;height:45px;border:2px solid #a9c1c9;background:#fff"></div>
<svg class="a" style="left:429px;top:725px" width="41" height="40" viewBox="0 0 41 40"><rect x="0.4" y="0.4" width="40.2" height="39.2" fill="#fff" stroke="#a7b0b4" stroke-width="0.8"/><path d="M4.0,3V37" stroke="#f0f0f0" stroke-width="0.5"/><path d="M8.2,3V37" stroke="#f0f0f0" stroke-width="0.5"/><path d="M12.4,3V37" stroke="#f0f0f0" stroke-width="0.5"/><path d="M16.6,3V37" stroke="#f0f0f0" stroke-width="0.5"/><path d="M20.8,3V37" stroke="#f0f0f0" stroke-width="0.5"/><path d="M25.0,3V37" stroke="#f0f0f0" stroke-width="0.5"/><path d="M29.2,3V37" stroke="#f0f0f0" stroke-width="0.5"/><path d="M33.4,3V37" stroke="#f0f0f0" stroke-width="0.5"/><path d="M37.6,3V37" stroke="#f0f0f0" stroke-width="0.5"/><path d="M41.8,3V37" stroke="#f0f0f0" stroke-width="0.5"/><path d="M3,4.0H44" stroke="#f0f0f0" stroke-width="0.5"/><path d="M3,7.6H44" stroke="#f0f0f0" stroke-width="0.5"/><path d="M3,11.2H44" stroke="#f0f0f0" stroke-width="0.5"/><path d="M3,14.8H44" stroke="#f0f0f0" stroke-width="0.5"/><path d="M3,18.4H44" stroke="#f0f0f0" stroke-width="0.5"/><path d="M3,22.0H44" stroke="#f0f0f0" stroke-width="0.5"/><path d="M3,25.6H44" stroke="#f0f0f0" stroke-width="0.5"/><path d="M3,29.2H44" stroke="#f0f0f0" stroke-width="0.5"/><path d="M3,32.8H44" stroke="#f0f0f0" stroke-width="0.5"/><path d="M3,36.4H44" stroke="#f0f0f0" stroke-width="0.5"/><path d="M3,3V37H39" fill="none" stroke="#c8c8c8" stroke-width="0.6"/></svg>
<svg class="a" style="left:429px;top:725px" width="46" height="40"><path d="M4,28L25,33L38,33M38,33V4" fill="none" stroke="#eab0b0" stroke-width="0.8"/></svg>
<div class="a" style="left:399px;top:767px;width:101px;height:14px;background:#9db4bc"></div>
<div class="t" style="left:408px;top:769px;font-size:10.5px;color:#eef2f3;transform-origin:0 0;transform:scaleX(0.9659);">THD+N Ratio vs...</div>
<div class="a" style="left:289px;top:783px;width:711px;height:6px;background:#4a7785"></div>
<div class="t" style="left:638px;top:781px;font-size:8px;color:#c8d6da;letter-spacing:0px">&#8226;&#8226;&#8226;</div>
<div class="a" style="left:289px;top:789px;width:711px;height:21px;background:#d8e3e5;border-bottom:1px solid #b8c4c8"></div>
<div class="t" style="left:292.6px;top:794px;font-size:11.5px;color:#222;transform-origin:0 0;transform:scaleX(0.9050);">Data Sets</div>
<div class="a" style="left:345px;top:792px;width:1px;height:15px;background:#bfcbcf"></div>
<svg class="a" style="left:352px;top:794px" width="11" height="11"><rect x="0.5" y="0.5" width="10" height="10" rx="1.5" fill="#4a7590" stroke="#3d6279"/><path d="M2.8,5.8L4.6,7.8L8.2,3" fill="none" stroke="#fff" stroke-width="1.3"/></svg>
<svg class="a" style="left:371.5px;top:794px" width="11" height="11"><rect x="1" y="1" width="9" height="9" rx="1.5" fill="#fff" stroke="#46697e" stroke-width="1.8"/></svg>
<div class="a" style="left:388px;top:792px;width:1px;height:15px;background:#bfcbcf"></div>
<svg class="a" style="left:394px;top:792px" width="14" height="15" viewBox="0 0 14 15"><rect width="14" height="15" fill="#2b4957"/><path d="M1.5,3H12.5M1.5,6H12.5M1.5,9H8M4.5,3V13M8,3V9" stroke="#fff" stroke-width="0.9"/><path d="M8.5,9.5L12.5,13.5M12.5,9.5L8.5,13.5" stroke="#fff" stroke-width="1.4"/></svg>
<div class="t" style="left:409.5px;top:794px;font-size:11.5px;color:#222;transform-origin:0 0;transform:scaleX(0.9370);">Clear Data</div>
<svg class="a" style="left:466px;top:798px" width="6" height="4"><path d="M0,0H6L3,3.5Z" fill="#222"/></svg>
<svg class="a" style="left:476px;top:792px" width="14" height="15" viewBox="0 0 14 15"><rect width="14" height="15" fill="#2b4957"/><path d="M1.5,3H12.5M1.5,6H12.5M1.5,9H12.5M4.5,3V13M8,3V13" stroke="#fff" stroke-width="0.9"/><path d="M0,10H6M4,8L6,10L4,12" fill="none" stroke="#fff" stroke-width="1.3"/></svg>
<div class="t" style="left:493px;top:794px;font-size:11.5px;color:#222;transform-origin:0 0;transform:scaleX(1.0249);">Import</div>
<svg class="a" style="left:535px;top:792px" width="14" height="15" viewBox="0 0 14 15"><rect width="14" height="15" fill="#2b4957"/><path d="M1.5,3H12.5M1.5,6H12.5M1.5,9H12.5M4.5,3V13M8,3V13" stroke="#fff" stroke-width="0.9"/><path d="M8,10H14M12,8L14,10L12,12" fill="none" stroke="#fff" stroke-width="1.3"/></svg>
<div class="t" style="left:551px;top:794px;font-size:11.5px;color:#222;transform-origin:0 0;transform:scaleX(0.9508);">Export</div>
<svg class="a" style="left:590.5px;top:792.5px" width="13" height="13" viewBox="0 0 13 13"><rect width="13" height="13" fill="#2b4957"/><path d="M5.60,1.58 L7.40,1.58 L7.13,2.96 L8.56,3.55 L9.35,2.39 L10.61,3.65 L9.45,4.44 L10.04,5.87 L11.42,5.60 L11.42,7.40 L10.04,7.13 L9.45,8.56 L10.61,9.35 L9.35,10.61 L8.56,9.45 L7.13,10.04 L7.40,11.42 L5.60,11.42 L5.87,10.04 L4.44,9.45 L3.65,10.61 L2.39,9.35 L3.55,8.56 L2.96,7.13 L1.58,7.40 L1.58,5.60 L2.96,5.87 L3.55,4.44 L2.39,3.65 L3.65,2.39 L4.44,3.55 L5.87,2.96Z" fill="#fff"/><circle cx="6.5" cy="6.5" r="1.4" fill="#2b4957"/></svg>
<div class="t" style="left:607px;top:794px;font-size:11.5px;color:#222;transform-origin:0 0;transform:scaleX(0.9169);">Data Settings</div>
<svg class="a" style="left:983px;top:793px" width="12" height="11"><path d="M4.8,0.5H7.2V3H9.5L6,6.5L2.5,3H4.8Z" fill="#2c4470"/><path d="M0.5,9H11.5" stroke="#2c4470" stroke-width="1.8"/></svg>
<div class="a" style="left:289px;top:811px;width:711px;height:79px;background:#f0f0f0"></div>
<div class="a" style="left:289px;top:811px;width:682px;height:20px;background:#f2f2f2;border-bottom:1px solid #b0b0b0;border-right:1px solid #b0b0b0"></div>
<div class="a" style="left:289px;top:830px;width:682px;height:20px;background:#fff;border-bottom:1px solid #ddd;border-right:1px solid #ddd"></div>
<div class="a" style="left:309px;top:811px;width:1px;height:39px;background:#d5d5d5"></div>
<div class="a" style="left:380px;top:811px;width:1px;height:39px;background:#d5d5d5"></div>
<div class="a" style="left:500px;top:811px;width:1px;height:39px;background:#d5d5d5"></div>
<div class="t" style="left:327.50px;top:818px;font-size:10px;color:#222;transform-origin:0 0;transform:scaleX(0.9254);">Data Set</div>
<div class="t" style="left:431px;top:818px">Time</div><div class="t" style="left:722px;top:818px">Notes</div>
<svg class="a" style="left:291px;top:833px" width="12" height="12"><rect x="0.5" y="0.5" width="11" height="11" fill="#f4f4f4" stroke="#aaa"/><path d="M2.5,6L5,8.5L9.5,3" fill="none" stroke="#999" stroke-width="1.2"/></svg>
<div class="t" style="left:311.90px;top:834px;font-size:10px;color:#222;transform-origin:0 0;transform:scaleX(0.9773);">Measured 1</div>
<div class="t" style="left:383.40px;top:834px;font-size:10px;color:#222;transform-origin:0 0;transform:scaleX(1.0518);">2020/10/14 23:35:32</div>
<div class="a" style="left:0;top:890px;width:1000px;height:19px;background:#f0f0f0;border-top:1px solid #e2e2e2;border-bottom:1px solid #b0b0b0"></div>
<div class="t" style="left:287px;top:895px;font-size:11px;color:#222">Output:</div>
<div class="a" style="left:329px;top:892px;width:158px;height:15px;background:#000"></div><div class="t" style="left:332px;top:895px;font-size:11px;color:#1fd21f">Analog Balanced 2 Ch, 40 ohm</div>
<div class="t" style="left:493px;top:895px;font-size:11px;color:#222">Input 1:</div>
<div class="a" style="left:537px;top:892px;width:168px;height:15px;background:#000"></div><div class="t" style="left:540px;top:895px;font-size:11px;color:#1fd21f">Analog Balanced 2 Ch, 200 kohm</div>
<div class="a" style="left:709px;top:892px;width:71px;height:15px;background:#000"></div><div class="t" style="left:712px;top:895px;font-size:11px;color:#1fd21f">310.0 mVrms</div>
<div class="a" style="left:783px;top:892px;width:120px;height:15px;background:#000"></div><div class="t" style="left:786px;top:895px;font-size:11px;color:#1fd21f">AC (&lt;10 Hz) - 22.4 kHz</div>
<div class="t" style="left:908px;top:895px;font-size:11px;color:#222">Input 2:</div>
<div class="a" style="left:952px;top:892px;width:34px;height:15px;background:#000"></div><div class="t" style="left:955px;top:895px;font-size:11px;color:#1fd21f">None</div>
</body></html>
